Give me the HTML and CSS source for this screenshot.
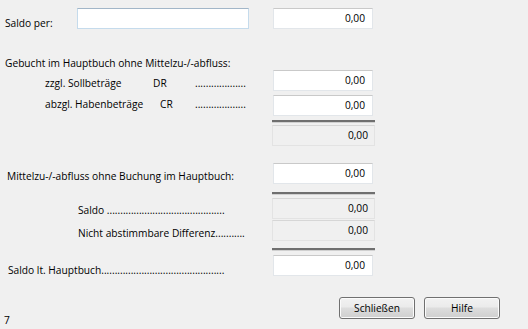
FILE: index.html
```html
<!DOCTYPE html>
<html lang="de">
<head>
  <meta charset="UTF-8">
  <title>Saldenabstimmung</title>
  <link rel="stylesheet" href="styles.css">
</head>
<body>
  <div class="dialog">
    <!-- Saldo per -->
    <div class="row row-top">
      <div class="label label-saldo">
        <span>Saldo per:</span>
        <div class="date-box"></div>
      </div>
      <div class="field">0,00</div>
    </div>

    <div class="heading heading-gebucht">Gebucht im Hauptbuch ohne Mittelzu-/-abfluss:</div>

    <div class="row row-zzgl">
      <div class="label label-sub">
        <span class="sub-text">zzgl. Sollbeträge</span>
        <span class="sub-code">DR</span>
        <span>...................</span>
      </div>
      <div class="field">0,00</div>
    </div>

    <div class="row row-abzgl">
      <div class="label label-sub label-abzgl">
        <span class="sub-text">abzgl. Habenbeträge</span>
        <span class="sub-code code-cr">CR</span>
        <span>...................</span>
      </div>
      <div class="field">0,00</div>
    </div>

    <div class="row sep-row"><div class="label"></div><div class="separator"></div></div>

    <div class="row row-sum1">
      <div class="label"></div>
      <div class="field readonly">0,00</div>
    </div>

    <div class="row row-mittel">
      <div class="label label-mittel">Mittelzu-/-abfluss ohne Buchung im Hauptbuch:</div>
      <div class="field">0,00</div>
    </div>

    <div class="row sep-row sep-2"><div class="label"></div><div class="separator"></div></div>

    <div class="row row-saldo">
      <div class="label label-inner">Saldo ............................................</div>
      <div class="field readonly">0,00</div>
    </div>

    <div class="row row-diff">
      <div class="label label-inner label-diff">Nicht abstimmbare Differenz...........</div>
      <div class="field readonly">0,00</div>
    </div>

    <div class="row sep-row sep-3"><div class="label"></div><div class="separator"></div></div>

    <div class="row row-hb">
      <div class="label label-hb">Saldo lt. Hauptbuch..............................................</div>
      <div class="field">0,00</div>
    </div>

    <div class="footer">
      <div class="page-no">7</div>
      <div class="buttons">
        <button class="btn">Schließen</button>
        <button class="btn">Hilfe</button>
      </div>
    </div>
  </div>
</body>
</html>
```

FILE: styles.css
```css
/* Window body */
body {
  margin: 0;
  background-color: #f0f0f0;
  font-family: 'Open Sans', 'Noto Sans', sans-serif;
  font-size: 10.2px;
  color: #000;
}

.dialog {
  width: 528px;
  height: 329px;
  padding-top: 8px;
  box-sizing: border-box;
  overflow: hidden;
}

/* Generic row: label column + value column */
.row {
  display: flex;
  align-items: flex-start;
  height: 21px;
}

.label {
  width: 273px;
  flex-shrink: 0;
  box-sizing: border-box;
  white-space: nowrap;
  line-height: 14px;
}

/* Value boxes */
.field {
  width: 100px;
  height: 21px;
  box-sizing: border-box;
  background: #fff;
  border: 1px solid #e2e6ea;
  border-top-color: #c9c9c9;
  text-align: right;
  padding-right: 7px;
  line-height: 19px;
}

.field.readonly {
  width: 103px;
  margin-left: -1px;
  background: #f0f0f0;
  border-color: #e3e3e3;
  border-top-color: #d6d6d6;
  padding-right: 6px;
}

/* Saldo per + date entry */
.label-saldo {
  display: flex;
  align-items: flex-start;
  padding-left: 5px;
}

.label-saldo span {
  width: 72px;
  padding-top: 8px;
}

.date-box {
  width: 172px;
  height: 21px;
  box-sizing: border-box;
  background: #fff;
  border: 1px solid #c5dbec;
  border-top-color: #a2b6c8;
}

.heading {
  line-height: 14px;
  padding-left: 5px;
}

.heading-gebucht {
  margin-top: 27px;
}

/* Sub rows under "Gebucht" */
.label-sub {
  display: flex;
  padding: 6px 0 0 45px;
}

.label-abzgl {
  padding-top: 2px;
}

.row-abzgl {
  margin-top: 4px;
}

.sub-text {
  width: 108px;
}

.sub-code {
  width: 42px;
  box-sizing: border-box;
}

.code-cr {
  padding-left: 7px;
}

/* Double rule above totals */
.sep-row {
  height: 3px;
  margin-top: 4px;
}

.separator {
  width: 103px;
  margin-left: -1px;
  height: 2px;
  background: #6f6f6f;
  border-bottom: 1px solid #d0d0d0;
}

.row-sum1 {
  margin-top: 2px;
}

.row-mittel {
  margin-top: 17px;
}

.label-mittel {
  padding: 6px 0 0 7px;
}

.sep-2 {
  margin-top: 8px;
}

.row-saldo {
  margin-top: 3px;
}

.row-diff {
  margin-top: 1px;
}

.label-inner {
  padding: 5px 0 0 78px;
}

.label-diff {
  padding-top: 6px;
}

.sep-3 {
  margin-top: 7px;
}

.row-hb {
  margin-top: 4px;
}

.label-hb {
  padding: 8px 0 0 8px;
}

/* Footer with buttons */
.footer {
  display: flex;
  align-items: flex-start;
  margin-top: 21px;
}

.page-no {
  width: 339px;
  padding: 16px 0 0 4px;
  box-sizing: border-box;
  line-height: 14px;
}

.buttons {
  display: flex;
  gap: 9px;
}

.btn {
  width: 76px;
  height: 22px;
  padding: 0;
  font-family: inherit;
  font-size: 10.2px;
  color: #000;
  border: 1px solid #707070;
  border-radius: 3px;
  background: linear-gradient(to bottom, #f2f2f2 0%, #ebebeb 45%, #dddddd 50%, #cfcfcf 100%);
  box-shadow: inset 0 0 0 1px #fbfbfb;
}
```
